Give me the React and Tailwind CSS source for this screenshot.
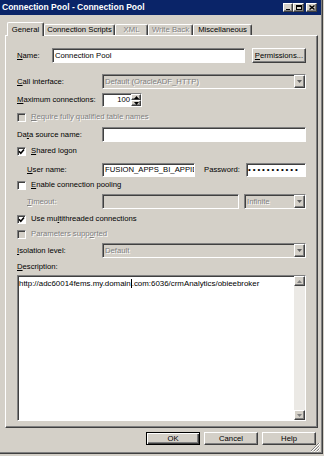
import React from "react";

// classic 3D edge helpers
const sunken =
  "border border-t-[#808080] border-l-[#808080] border-r-white border-b-white shadow-[inset_1px_1px_0_#404040]";
const raised =
  "border border-t-white border-l-white border-r-[#404040] border-b-[#404040] shadow-[inset_-1px_-1px_0_#808080]";
const disabledText = "text-[#808080] [text-shadow:1px_1px_0_#ffffff]";

const Arrow = ({ down = true, color = "#808080" }) => (
  <svg width="5" height="3" viewBox="0 0 5 3">
    <polygon points={down ? "0,0 5,0 2.5,3" : "0,3 5,3 2.5,0"} fill={color} />
  </svg>
);

const DropButton = () => (
  <div className={`${raised} bg-[#d4d0c8] w-[11px] h-full flex items-center justify-center`}>
    <Arrow color="#606060" />
  </div>
);

const Select = ({ value, className = "" }) => (
  <div className={`${sunken} bg-[#d4d0c8] flex items-stretch ${className}`}>
    <div className={`flex-1 flex items-center pl-[2px] ${disabledText}`}>{value}</div>
    <DropButton />
  </div>
);

const Check = ({ checked, disabled, label }) => (
  <div className="flex items-center h-[12px]">
    <div
      className={`${sunken} w-[9px] h-[9px] flex items-center justify-center ${
        disabled ? "bg-[#d4d0c8]" : "bg-white"
      }`}
    >
      {checked && (
        <svg width="7" height="7" viewBox="0 0 7 7">
          <polyline points="1,3.2 2.8,5.2 6,1.5" fill="none" stroke="#000" strokeWidth="1.6" />
        </svg>
      )}
    </div>
    <span className={`ml-[5px] ${disabled ? disabledText : ""}`}>{label}</span>
  </div>
);

const Button = ({ children, isDefault }) => (
  <div
    className={`w-[54px] h-[13px] bg-[#d4d0c8] flex items-center justify-center ${
      isDefault
        ? "border border-black shadow-[inset_1px_1px_0_#ffffff,inset_-1px_-1px_0_#404040,inset_-2px_-2px_0_#808080]"
        : raised
    }`}
  >
    {children}
  </div>
);

const TitleButton = ({ children, className = "" }) => (
  <div className={`${raised} bg-[#d4d0c8] w-[10px] h-[9px] flex items-center justify-center ${className}`}>
    {children}
  </div>
);

const Tab = ({ children, width, selected, disabled }) => (
  <div
    className={`${
      selected ? "h-[14px] -mb-[1px] z-10" : "h-[11px]"
    } bg-[#d4d0c8] border-t border-l border-r border-t-white border-l-white border-r-[#404040] rounded-t-[2px] shadow-[inset_-1px_0_0_#808080] flex items-center justify-center ${
      disabled ? disabledText : ""
    }`}
    style={{ width }}
  >
    {children}
  </div>
);

export default function App() {
  return (
    <div className="w-[324px] h-[456px] bg-[#d4d0c8] font-['Liberation_Sans',Arial,sans-serif] text-[7.7px] leading-none text-black">
      <div className="relative w-[323px] h-[454px] border-r border-b border-[#404040] shadow-[inset_-1px_-1px_0_#808080] flex flex-col">
        {/* title bar */}
        <div className="h-[15px] w-[321px] bg-[#0a2468] flex items-center pl-[2px] pr-[4px]">
          <span className="text-white font-bold text-[8.5px]">Connection Pool - Connection Pool</span>
          <div className="ml-auto flex items-center">
            <TitleButton>
              <div className="w-[4px] h-[1.5px] bg-black mt-[4px] -ml-[1px]" />
            </TitleButton>
            <TitleButton className="w-[11px]">
              <div className="w-[6px] h-[5px] border border-black border-t-2" />
            </TitleButton>
            <TitleButton className="w-[11px] ml-[2px]">
              <svg width="6" height="5" viewBox="0 0 6 5">
                <path d="M0.5 0.5 L5.5 4.5 M5.5 0.5 L0.5 4.5" stroke="#000" strokeWidth="1.4" />
              </svg>
            </TitleButton>
          </div>
        </div>

        {/* tabs and page */}
        <div className="pl-[5px] pr-[4px] pt-[7px] flex flex-col">
          <div className="flex items-end h-[13px] pl-[2px] relative">
            <Tab width={37} selected>General</Tab>
            <Tab width={71}>Connection Scripts</Tab>
            <Tab width={33} disabled>XML</Tab>
            <Tab width={45} disabled>Write Back</Tab>
            <Tab width={59}>Miscellaneous</Tab>
          </div>

          <div className={`${raised} h-[393px] pl-[11px] pr-[11px] pt-[12px] flex flex-col`}>
            {/* name */}
            <div className="flex items-center h-[15px]">
              <span className="w-[35px]">
                <u>N</u>ame:
              </span>
              <div className={`${sunken} bg-white w-[193px] h-[15px] flex items-center pl-[2px]`}>Connection Pool</div>
              <div className="ml-auto">
                <div className={`${raised} bg-[#d4d0c8] w-[54px] h-[15px] flex items-center justify-center`}>
                  <span>
                    <u>P</u>ermissions...
                  </span>
                </div>
              </div>
            </div>

            {/* call interface */}
            <div className="flex items-center h-[15px] mt-[11px]">
              <span className="w-[85px]">
                <u>C</u>all interface:
              </span>
              <Select value="Default (OracleADF_HTTP)" className="flex-1 h-[15px]" />
            </div>

            {/* max connections */}
            <div className="flex items-center h-[14px] mt-[4px]">
              <span className="w-[85px]">
                <u>M</u>aximum connections:
              </span>
              <div className={`${sunken} bg-white w-[40px] h-[14px] flex items-stretch`}>
                <div className="flex-1 flex items-center justify-end pr-[1px]">100</div>
                <div className="w-[10px] flex flex-col">
                  <div className={`${raised} bg-[#d4d0c8] flex-1 flex items-center justify-center`}>
                    <Arrow down={false} color="#000" />
                  </div>
                  <div className={`${raised} bg-[#d4d0c8] flex-1 flex items-center justify-center`}>
                    <Arrow color="#000" />
                  </div>
                </div>
              </div>
            </div>

            <div className="mt-[4px]">
              <Check
                disabled
                label={
                  <>
                    <u>R</u>equire fully qualified table names
                  </>
                }
              />
            </div>

            {/* data source */}
            <div className="flex items-center h-[15px] mt-[4px]">
              <span className="w-[85px]">
                Da<u>t</u>a source name:
              </span>
              <div className={`${sunken} bg-white flex-1 h-[15px]`} />
            </div>

            <div className="mt-[3px]">
              <Check
                checked
                label={
                  <>
                    <u>S</u>hared logon
                  </>
                }
              />
            </div>

            {/* user / password */}
            <div className="flex items-center h-[14px] mt-[6px]">
              <span className="w-[85px] pl-[10px]">
                <u>U</u>ser name:
              </span>
              <div className={`${sunken} bg-white w-[93px] h-[14px] flex items-center pl-[2px] overflow-hidden whitespace-nowrap`}>
                FUSION_APPS_BI_APPID
              </div>
              <span className="ml-[9px]">Password:</span>
              <div className={`${sunken} bg-white w-[60px] h-[14px] ml-auto flex items-center pl-[1px] overflow-hidden whitespace-nowrap text-[8px] tracking-[1.9px]`}>
                •••••••••••
              </div>
            </div>

            <div className="mt-[2px]">
              <Check
                label={
                  <>
                    <u>E</u>nable connection pooling
                  </>
                }
              />
            </div>

            {/* timeout */}
            <div className="flex items-center h-[15px] mt-[3px]">
              <span className={`w-[85px] pl-[10px] ${disabledText}`}>
                <u>T</u>imeout:
              </span>
              <div className={`${sunken} bg-[#d4d0c8] w-[137px] h-[15px]`} />
              <Select value="Infinite" className="ml-auto w-[62px] h-[15px]" />
            </div>

            <div className="mt-[4px]">
              <Check
                checked
                label={
                  <>
                    Use mu<u>l</u>tithreaded connections
                  </>
                }
              />
            </div>

            <div className="mt-[3px]">
              <Check
                disabled
                label={
                  <>
                    Parameters supp<u>o</u>rted
                  </>
                }
              />
            </div>

            {/* isolation */}
            <div className="flex items-center h-[15px] mt-[3px]">
              <span className="w-[85px]">
                <u>I</u>solation level:
              </span>
              <Select value="Default" className="flex-1 h-[15px]" />
            </div>

            <div className="flex items-center h-[12px] mt-[3px]">
              <span>
                <u>D</u>escription:
              </span>
            </div>

            {/* description box */}
            <div className={`${sunken} bg-white h-[146px] mt-[2px] flex`}>
              <div className="flex-1 pl-[1px] pt-[3px] leading-[9px] whitespace-nowrap text-[7.9px]">
                http://adc60014fems.my.domain
                <span className="inline-block w-[1px] h-[9px] bg-black align-top" />
                .com:6036/crmAnalytics/obieebroker
              </div>
              <div className="w-[11px] flex flex-col">
                <div className={`${raised} bg-[#d4d0c8] h-[10px] flex items-center justify-center`}>
                  <Arrow down={false} />
                </div>
                <div className="flex-1 bg-[#ebe9e5]" />
                <div className={`${raised} bg-[#d4d0c8] h-[10px] flex items-center justify-center`}>
                  <Arrow />
                </div>
              </div>
            </div>
          </div>
        </div>

        {/* dialog buttons */}
        <div className="flex justify-end gap-[4px] pr-[6px] mt-[4px]">
          <Button isDefault>OK</Button>
          <Button>Cancel</Button>
          <Button>Help</Button>
        </div>

        {/* size grip */}
        <svg className="absolute right-[2px] bottom-[1px]" width="10" height="10" viewBox="0 0 10 10">
          <path d="M9 1 L1 9 M9 4 L4 9 M9 7 L7 9" stroke="#808080" strokeWidth="1" />
          <path d="M10 1 L1 10 M10 4 L4 10 M10 7 L7 10" stroke="#ffffff" strokeWidth="1" />
        </svg>
      </div>
    </div>
  );
}
